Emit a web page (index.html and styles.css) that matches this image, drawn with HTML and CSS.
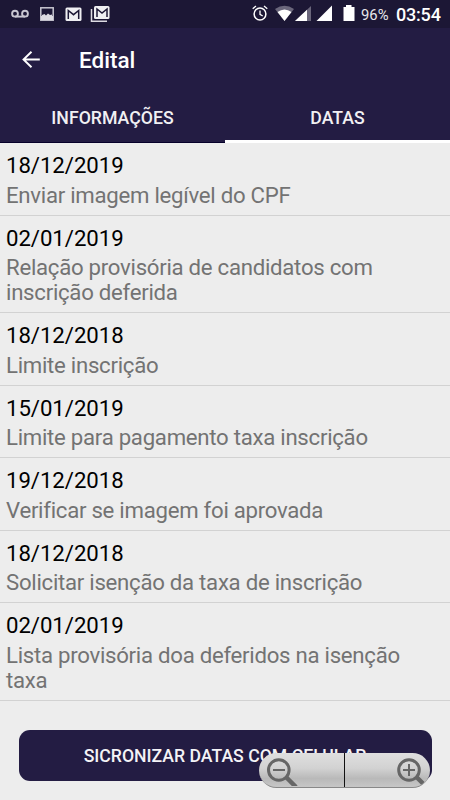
FILE: index.html
```html
<!DOCTYPE html>
<html lang="pt-BR">
<head>
<meta charset="utf-8">
<title>Edital</title>
<link rel="stylesheet" href="styles.css">
</head>
<body>
<div class="screen">
  <div class="status">
    <svg class="status-left" width="112" height="28" viewBox="0 0 112 28" fill="none">
      <g stroke="#c9c7d1" stroke-width="1.9"><circle cx="15" cy="13.700" r="2.900"/><circle cx="25" cy="13.700" r="2.900"/><path d="M15 16.600H25"/></g>
      <rect x="40.800" y="7.800" width="12.400" height="12.400" stroke="#c9c7d1" stroke-width="1.500"/>
      <path d="M42 16.500V15L44.500 14L46 15.500L48 13.500L50 15L52 14.500V16.500Z" fill="#dddbe2"/>
      <path d="M41 16H53V20H41Z" fill="#dddbe2"/>
      <rect x="65.500" y="7.500" width="16" height="13.500" rx="1.500" fill="#efeff2"/>
      <path d="M68.300 19V10.500L73.500 14.700L78.700 10.500V19" stroke="#1c1735" stroke-width="1.500"/>
      <rect x="94" y="6" width="15.500" height="13" rx="1.500" fill="#efeff2"/>
      <path d="M97 17V9L102 13L107 9V17" stroke="#1c1735" stroke-width="1.500"/>
      <path d="M91.500 9V21.200H107" stroke="#dddbe2" stroke-width="1.500"/>
    </svg>
    <svg class="status-right" width="104" height="28" viewBox="252 0 104 28" fill="none">
      <circle cx="260" cy="14" r="5.900" stroke="#fff" stroke-width="1.500"/>
      <path d="M260 10.500V14.300L262.700 16M252.700 8.800L256 6.100M264 6.100L267.300 8.800" stroke="#fff" stroke-width="1.300"/>
      <path d="M275 9Q284.500 2.500 294 9L284.500 21Z" fill="#6a667b"/>
      <path d="M277.500 12Q284.500 7 291.500 12L284.500 21Z" fill="#fff"/>
      <path d="M295 21L311 6V21Z" fill="#6a667b"/>
      <path d="M295 21L307 9.700V21Z" fill="#fff"/>
      <path d="M316.500 21L332 5.500V21Z" fill="#fff"/>
      <path d="M343.500 7H346V5H351.500V7H354.500V21H343.500Z" fill="#fff"/>
    </svg>
    <span class="battery">96%</span>
    <span class="clock">03:54</span>
  </div>
  <header class="appbar">
    <svg width="18" height="18" viewBox="0 0 18 18" fill="none" stroke="#fff" stroke-width="1.900"><path d="M9.500 0.700L1.500 8.500L9.500 16.300M1.500 8.500H17.800"/></svg>
    <h1 class="title">Edital</h1>
  </header>
  <nav class="tabs">
    <div class="tab"><span>INFORMAÇÕES</span></div>
    <div class="tab tab-active"><span>DATAS</span></div>
  </nav>
  <main class="list">
    <div class="item"><div class="date">18/12/2019</div><div class="desc">Enviar imagem legível do CPF</div></div>
    <div class="item"><div class="date">02/01/2019</div><div class="desc">Relação provisória de candidatos com<br>inscrição deferida</div></div>
    <div class="item"><div class="date">18/12/2018</div><div class="desc">Limite inscrição</div></div>
    <div class="item"><div class="date">15/01/2019</div><div class="desc">Limite para pagamento taxa inscrição</div></div>
    <div class="item"><div class="date">19/12/2018</div><div class="desc">Verificar se imagem foi aprovada</div></div>
    <div class="item"><div class="date">18/12/2018</div><div class="desc">Solicitar isenção da taxa de inscrição</div></div>
    <div class="item"><div class="date">02/01/2019</div><div class="desc">Lista provisória doa deferidos na isenção<br>taxa</div></div>
  </main>
  <div class="sync"><span>SICRONIZAR DATAS COM CELULAR</span></div>
  <div class="zoom">
    <div class="zoom-half zoom-out">
      <svg width="32" height="28" viewBox="0 0 32 28" fill="none"><circle cx="12.800" cy="12" r="10.300" stroke="#666" stroke-width="3"/><path d="M20 19L30 29" stroke="#666" stroke-width="4.500"/><path d="M7 12H19" stroke="#666" stroke-width="2"/></svg>
    </div>
    <div class="zoom-half zoom-in">
      <svg width="28" height="28" viewBox="0 0 28 28" fill="none"><circle cx="12" cy="12" r="10.300" stroke="#666" stroke-width="3"/><path d="M19 18.500L26 25.500" stroke="#666" stroke-width="4.500"/><path d="M6 12H18M12 6V18" stroke="#666" stroke-width="2"/></svg>
    </div>
  </div>
</div>
</body>
</html>
```
FILE: styles.css
```css
* { box-sizing: border-box; }
body { margin: 0; background: #ededed; font-family: Roboto, "Liberation Sans", sans-serif; }
svg { display: block; flex: none; }
.screen { position: relative; width: 450px; height: 800px; overflow: hidden; background: #ededed; }
.status { height: 28px; display: flex; align-items: center; background: #1c1735; color: #fff; }
.status-right { margin-left: 140px; }
.battery { width: 35px; margin-left: 5px; font-size: 14.8px; line-height: 28px; padding-top: 2px; color: #e8e7eb; }
.clock { font-size: 18px; font-weight: 500; line-height: 28px; padding-top: 1px; letter-spacing: -0.2px; }
.appbar { height: 64px; display: flex; align-items: center; padding-left: 22px; background: #231c43; color: #fff; }
.title { margin: 0 0 0 39px; font-size: 22.5px; font-weight: 500; line-height: 28px; }
.tabs { height: 51px; display: flex; background: #231c43; color: #f1f0f3; }
.tab { flex: 1; text-align: center; font-size: 17.7px; font-weight: 500; line-height: 52px; border-bottom: 1px solid #06002a; }
.tab-active { border-bottom: 3px solid #fff; }
.item { padding: 9px 6px 7px; border-bottom: 1px solid #d2d2d2; font-size: 22.2px; }
.date { line-height: 26px; margin-bottom: 4.5px; color: #000; letter-spacing: -0.05px; }
.desc { line-height: 25px; color: #737373; white-space: nowrap; letter-spacing: -0.27px; }
.sync { width: 413px; height: 51px; margin: 29.4px 0 0 18.5px; border-radius: 11px; background: #231c43; color: #f4f3f6; text-align: center; font-size: 17.65px; font-weight: 500; line-height: 53px; }
.zoom { position: absolute; left: 259px; top: 753px; width: 171px; height: 35px; display: flex; border-radius: 18px; overflow: hidden; background: linear-gradient(#dfdfdf, #d2d2d2 45%, #b9b9b9 75%, #c6c6c6); border-bottom: 1px solid #888; }
.zoom-half { height: 34px; padding-top: 5px; }
.zoom-out { width: 86px; padding-left: 7px; border-right: 1px solid #111; }
.zoom-in { width: 85px; padding-left: 52px; }
```
